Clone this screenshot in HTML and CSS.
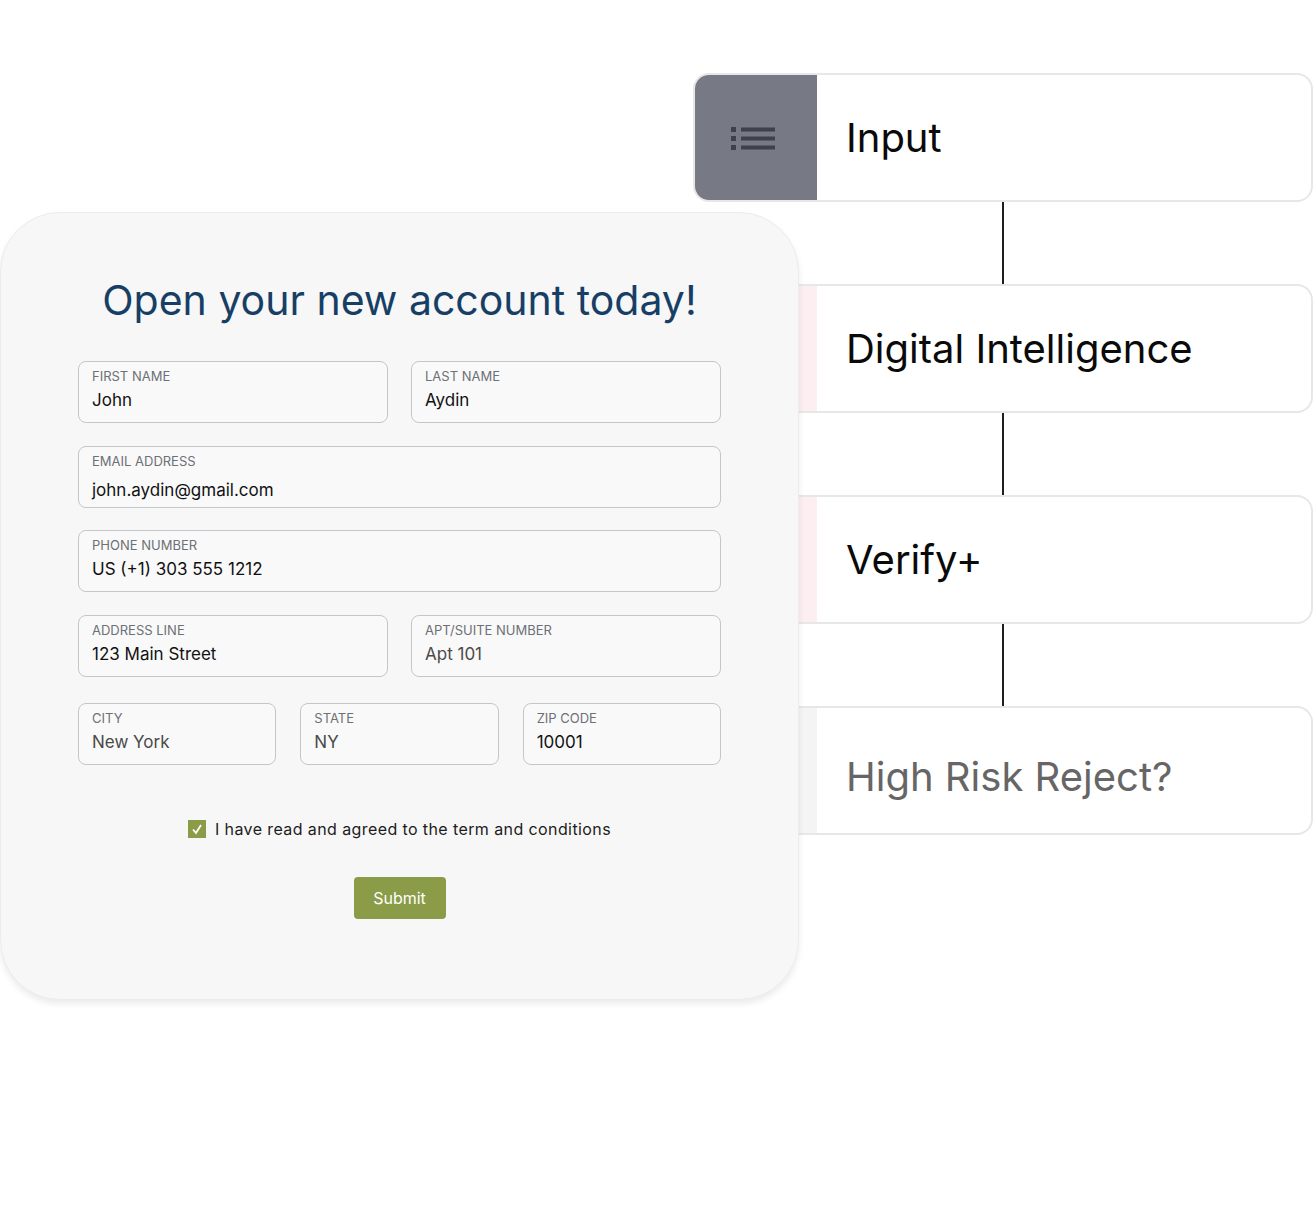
FILE: index.html
```html
<html lang="en">
    <head>
        <title>Open your new account</title>
        <link rel="stylesheet" href="styles.css">
    </head>
    <body>
        <div class="stage">
            <div class="flow">
                <div class="step step-active">
                    <div class="step-tab">
                        <svg width="44" height="24" viewBox="0 0 44 24">
                            <rect x="0" y="1" width="5" height="5" fill="#3e404c"/>
                            <rect x="10" y="1.5" width="34" height="4" fill="#3e404c"/>
                            <rect x="0" y="10" width="5" height="5" fill="#3e404c"/>
                            <rect x="10" y="10.5" width="34" height="4" fill="#3e404c"/>
                            <rect x="0" y="19" width="5" height="5" fill="#3e404c"/>
                            <rect x="10" y="19.5" width="34" height="4" fill="#3e404c"/>
                        </svg>
                    </div>
                    <div class="step-label">Input</div>
                </div>
                <div class="link"></div>
                <div class="step">
                    <div class="step-tab"></div>
                    <div class="step-label">Digital Intelligence</div>
                </div>
                <div class="link"></div>
                <div class="step">
                    <div class="step-tab"></div>
                    <div class="step-label">Verify+</div>
                </div>
                <div class="link"></div>
                <div class="step step-muted">
                    <div class="step-tab"></div>
                    <div class="step-label">High Risk Reject?</div>
                </div>
            </div>

            <form class="signup">
                <h1>Open your new account today!</h1>

                <div class="row">
                    <div class="field"><label>First Name</label><div class="value">John</div></div>
                    <div class="field"><label>Last Name</label><div class="value">Aydin</div></div>
                </div>
                <div class="row row-one row-tight">
                    <div class="field field-tall"><label>Email Address</label><div class="value">john.aydin@gmail.com</div></div>
                </div>
                <div class="row row-one">
                    <div class="field"><label>Phone Number</label><div class="value">US (+1) 303 555 1212</div></div>
                </div>
                <div class="row">
                    <div class="field"><label>Address Line</label><div class="value">123 Main Street</div></div>
                    <div class="field"><label>Apt/Suite Number</label><div class="value soft">Apt 101</div></div>
                </div>
                <div class="row row-three">
                    <div class="field"><label>City</label><div class="value soft">New York</div></div>
                    <div class="field"><label>State</label><div class="value soft">NY</div></div>
                    <div class="field"><label>Zip Code</label><div class="value">10001</div></div>
                </div>

                <div class="agree">
                    <span class="tick">
                        <svg width="18" height="18" viewBox="0 0 18 18"><path d="M5 9.5 L8 13 L13 5" fill="none" stroke="#fff" stroke-width="1.8"/></svg>
                    </span>
                    I have read and agreed to the term and conditions
                </div>

                <button type="button" class="submit">Submit</button>
            </form>
        </div>
    </body>
</html>
```

FILE: styles.css
```css
body{
    margin:0;
    background:#fff;
    font-family: Inter, "Open Sans", sans-serif;
}
.stage{
    display:grid;
}
.flow, .signup{
    grid-area:1 / 1;
    align-self:start;
    justify-self:start;
}

/* flow on the right */
.flow{
    margin:73px 0 0 693px;
    width:620px;
    display:flex;
    flex-direction:column;
    align-items:center;
}
.step{
    width:100%;
    height:129px;
    box-sizing:border-box;
    border:2px solid #e7e7e7;
    border-radius:16px;
    display:flex;
    overflow:hidden;
    background:#fff;
}
.step-tab{
    width:122px;
    flex:none;
    background:#fdeef2;
    display:flex;
    align-items:center;
    justify-content:center;
}
.step-active .step-tab{
    background:#777a85;
    padding-right:6px;
    box-sizing:border-box;
}
.step-muted .step-tab{
    background:#f4f4f4;
}
.step-label{
    padding-left:29px;
    display:flex;
    align-items:center;
    font-size:40px;
    color:#0a0a0a;
}
.step-muted .step-label{
    color:#666;
    padding-top:12px;
}
.link{
    width:2px;
    height:82px;
    background:#1e1e1e;
}

/* form card */
.signup{
    position:relative;
    z-index:1;
    margin:212px 0 0 0;
    width:799px;
    height:788px;
    box-sizing:border-box;
    padding:0 77px;
    background:#f7f7f7;
    border:1px solid #ececec;
    border-radius:60px;
    box-shadow:0 4px 6px rgba(0,0,0,.08);
}
h1{
    margin:62px 0 36px;
    text-align:center;
    font-weight:400;
    font-size:41px;
    line-height:50px;
    color:#173f66;
}
.row{
    display:grid;
    grid-template-columns:1fr 1fr;
    gap:23px;
    margin-bottom:23px;
}
.row-one{
    grid-template-columns:1fr;
}
.row-tight{
    margin-bottom:22px;
}
.row-three{
    grid-template-columns:1fr 1fr 1fr;
    gap:24px;
    margin-top:26px;
}
.field{
    height:62px;
    box-sizing:border-box;
    padding:6px 13px 0;
    border:1px solid #c3c6ca;
    border-radius:8px;
    background:#f9f9f9;
}
label{
    display:block;
    font-size:13px;
    line-height:16px;
    color:#6c7077;
    text-transform:uppercase;
}
.value{
    margin-top:5px;
    font-size:17px;
    line-height:22px;
    color:#111;
}
.field-tall .value{
    margin-top:10px;
}
.value.soft{
    color:#4a4a4a;
}
.agree{
    margin-top:54px;
    display:flex;
    align-items:center;
    justify-content:center;
    gap:9px;
    font-size:16px;
    letter-spacing:.4px;
    color:#1c1c1c;
}
.tick{
    width:18px;
    height:18px;
    background:#8a9c47;
    display:flex;
}
.submit{
    display:block;
    margin:38px auto 0;
    width:92px;
    height:42px;
    border:none;
    border-radius:4px;
    background:#8a9c47;
    color:#fff;
    font-family:inherit;
    font-size:16px;
}
```
